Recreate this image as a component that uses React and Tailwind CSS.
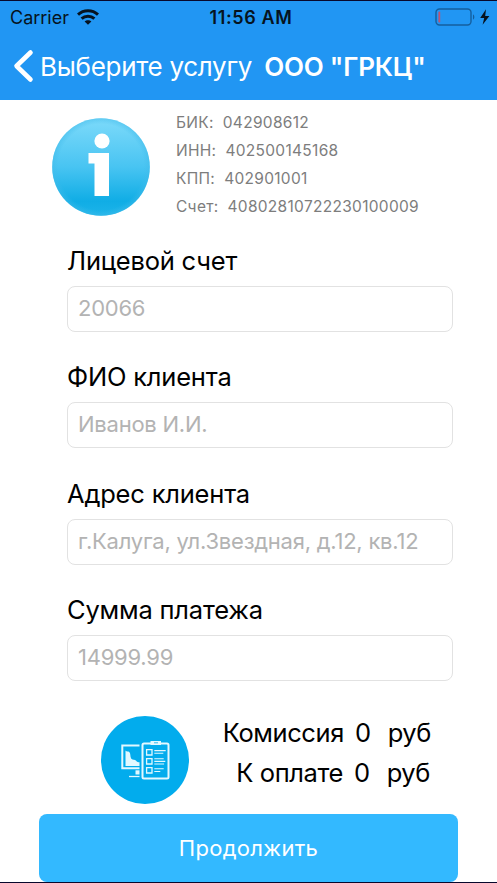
import React, { useState } from 'react';

const details = [
  { label: 'БИК:', value: '042908612', gap: 'gap-[9px]' },
  { label: 'ИНН:', value: '402500145168', gap: 'gap-[9px]' },
  { label: 'КПП:', value: '402901001', gap: 'gap-[9px]' },
  { label: 'Счет:', value: '40802810722230100009', gap: 'gap-[9px]' },
];

const fields = [
  { id: 'account', label: 'Лицевой счет', placeholder: '20066' },
  { id: 'name', label: 'ФИО клиента', placeholder: 'Иванов И.И.' },
  { id: 'address', label: 'Адрес клиента', placeholder: 'г.Калуга, ул.Звездная, д.12, кв.12' },
  { id: 'amount', label: 'Сумма платежа', placeholder: '14999.99' },
];

const WifiIcon = () => (
  <svg width="22" height="16" viewBox="0 0 22 16" fill="none" stroke="#061320" strokeWidth="3">
    <path d="M1 5.6C6.6 .4 15.4 .4 21 5.6" />
    <path d="M4.6 9.7c3.6-3.4 9.2-3.4 12.8 0" />
    <path d="M11 15.8 7.6 12.6c1.8-1.7 5-1.7 6.8 0z" fill="#061320" stroke="none" />
  </svg>
);

const BatteryIcon = () => (
  <svg width="55" height="18" viewBox="0 0 55 18" fill="none">
    <rect x="1" y="1" width="35" height="16" rx="3.5" stroke="#155f9e" strokeWidth="1.4" />
    <path d="M38 6.5c1.8.6 1.8 4.4 0 5z" fill="#155f9e" />
    <rect x="3.4" y="3.6" width="1.8" height="11" rx=".8" fill="#c3526f" />
    <path d="M51 1.2 45.2 10h4l-1.6 6.8L54.4 8h-4.2z" fill="#061320" />
  </svg>
);

const InfoIcon = () => (
  <svg width="98" height="98" viewBox="0 0 98 98">
    <defs>
      <linearGradient id="infoFill" x1="0" y1="0" x2="0" y2="1">
        <stop offset="0" stopColor="#7ddafa" />
        <stop offset=".5" stopColor="#48c4f2" />
        <stop offset=".85" stopColor="#10ade5" />
        <stop offset="1" stopColor="#1db4e9" />
      </linearGradient>
      <radialGradient id="infoRim">
        <stop offset=".88" stopColor="#41bbea" stopOpacity="0" />
        <stop offset="1" stopColor="#41bbea" stopOpacity=".5" />
      </radialGradient>
    </defs>
    <circle cx="49" cy="49" r="48.8" fill="url(#infoFill)" />
    <circle cx="49" cy="49" r="48.8" fill="url(#infoRim)" />
    <circle cx="50" cy="23" r="7.6" fill="#fff" />
    <path d="M36.5 35H57v43H42.5V45.5h-6z" fill="#fff" />
  </svg>
);

const PaymentIcon = () => (
  <svg width="88" height="88" viewBox="0 0 88 88" fill="none" stroke="#e2f8ff">
    <circle cx="44" cy="44" r="44" fill="#02aced" stroke="none" />
    <path d="M38.5 29.5H21.3v22.7h17.2" strokeWidth="2" />
    <path d="M24.5 34.5c1.2 1.4 2.6.6 3.8 1.6 1.6 1.6.6 5 2 6.6 1.6 1.4 3.6.6 4.8 2 .8 1.4 2 1.6 3.4 1.6V50h-14z" fill="#e2f8ff" stroke="none" />
    <path d="M34.5 54.3h4v4.2h-4z" fill="#e2f8ff" stroke="none" />
    <path d="M28 60.5h10.5" strokeWidth="1.3" />
    <rect x="41.5" y="27.5" width="26" height="35" rx="1.5" strokeWidth="2" />
    <path d="M49.5 25h10.5v4H49.5z" fill="#e2f8ff" stroke="none" />
    <path d="M53 26.8h4" stroke="#02aced" strokeWidth=".8" />
    <path d="M45.6 33.6h5.4v5.4h-5.4zM45.6 42.6h5.4v5.4h-5.4zM45.6 51.6h5.4v5.4h-5.4z" strokeWidth="1.3" />
    <path d="M53.3 34.6h11.4M53.3 37.2h9M53.3 42.8h9.4M53.3 45.4h11M53.3 48h9.8M53.3 52.8h9.4M53.3 55.5h6" strokeWidth="1.1" />
  </svg>
);

const App = () => {
  const [values, setValues] = useState({});

  return (
    <div className="flex h-[883px] w-[497px] flex-col overflow-hidden border-t border-b border-[#08082c] bg-white font-['Inter','Liberation_Sans',sans-serif] text-black">
      <header className="flex h-[99px] shrink-0 flex-col bg-[#2196f3] text-white">
        <div className="grid h-8 grid-cols-[1fr_auto_1fr] items-center pr-[7px] pl-[10px] text-[#061320]">
          <div className="flex items-center gap-[8px] text-[18px]">
            Carrier <WifiIcon />
          </div>
          <div className="pl-[2px] text-[18px] font-semibold tracking-[0.6px]">11:56 AM</div>
          <div className="flex justify-end">
            <BatteryIcon />
          </div>
        </div>
        <div className="flex h-[66px] items-center pl-[13px] whitespace-nowrap">
          <button className="flex items-center gap-[6px] text-[26px] tracking-[-0.3px]">
            <svg width="21" height="34" viewBox="0 0 21 34" fill="none" stroke="white" strokeWidth="4.6" strokeLinecap="round" strokeLinejoin="round">
              <path d="M17.5 3.5 3.5 17l14 13.5" />
            </svg>
            Выберите услугу
          </button>
          <h1 className="ml-[12px] text-[26px] font-semibold tracking-[-0.2px]">ООО "ГРКЦ"</h1>
        </div>
      </header>

      <section className="flex h-[136px] shrink-0 gap-[26px] pt-[9px] pl-[52px]">
        <div className="pt-[9px]">
          <InfoIcon />
        </div>
        <div className="text-[15.5px] leading-[28px] tracking-[0.3px] text-[#7d7d7d]">
          {details.map((d) => (
            <div key={d.label} className={`flex ${d.gap}`}>
              <span>{d.label}</span>
              <span>{d.value}</span>
            </div>
          ))}
        </div>
      </section>

      <form className="flex shrink-0 flex-col gap-[20.3px] pr-[44px] pl-[67px]">
        {fields.map((f) => (
          <div key={f.id} className="flex flex-col">
            <label htmlFor={f.id} className="h-[50px] text-[25.5px] leading-[50px] tracking-[-0.2px]">
              {f.label}
            </label>
            <input
              id={f.id}
              type="text"
              placeholder={f.placeholder}
              value={values[f.id] || ''}
              onChange={(e) => setValues({ ...values, [f.id]: e.target.value })}
              className="h-[46px] rounded-[8px] border border-[#e2e2e2] px-[10px] pb-[2px] text-[22px] tracking-[-0.24px] outline-none placeholder:text-[#b3b3b3]"
            />
          </div>
        ))}
      </form>

      <section className="flex h-[133px] shrink-0 pt-[32px] pr-[66px] pl-[101px]">
        <div className="pt-[3px]">
          <PaymentIcon />
        </div>
        <div className="flex flex-1 flex-col items-end text-[25.5px] leading-[40.5px] tracking-[-0.4px]">
          <div className="flex">
            <span>Комиссия</span>
            <span className="ml-[11px]">0</span>
            <span className="ml-[17px]">руб</span>
          </div>
          <div className="flex pr-[1px]">
            <span>К оплате</span>
            <span className="ml-[11px]">0</span>
            <span className="ml-[17px]">руб</span>
          </div>
        </div>
      </section>

      <button className="ml-[39px] h-[68px] w-[419px] shrink-0 rounded-[8px] bg-[#33b9ff] pt-[2px] text-[22px] tracking-[0.3px] text-white">
        Продолжить
      </button>
    </div>
  );
};

export default App;
